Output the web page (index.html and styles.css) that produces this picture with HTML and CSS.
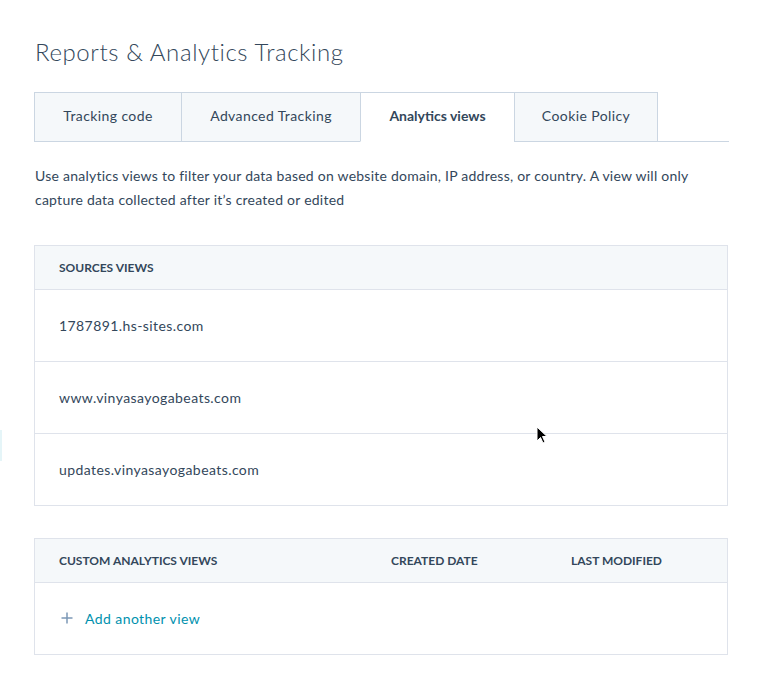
FILE: index.html
```html
<!DOCTYPE html>
<html>
<head>
<meta charset="utf-8">
<link rel="stylesheet" href="styles.css">
</head>
<body>
<div class="page">
  <h1 class="title">Reports &amp; Analytics Tracking</h1>
  <div class="tabs">
    <div class="tab">Tracking code</div>
    <div class="tab">Advanced Tracking</div>
    <div class="tab active">Analytics views</div>
    <div class="tab">Cookie Policy</div>
    <div class="tab-fill"></div>
  </div>
  <p class="desc">Use analytics views to filter your data based on website domain, IP address, or country. A view will only capture data collected after it’s created or edited</p>

  <div class="table">
    <div class="thead"><div class="cell">SOURCES VIEWS</div></div>
    <div class="row"><div class="cell">1787891.hs-sites.com</div></div>
    <div class="row"><div class="cell">www.vinyasayogabeats.com</div></div>
    <div class="row"><div class="cell">updates.vinyasayogabeats.com</div></div>
  </div>

  <div class="table custom">
    <div class="thead cols">
      <div class="cell">CUSTOM ANALYTICS VIEWS</div>
      <div class="cell">CREATED DATE</div>
      <div class="cell">LAST MODIFIED</div>
    </div>
    <div class="row">
      <div class="cell add">
        <svg class="plus" width="12" height="12" viewBox="0 0 12 12"><path d="M6 0.5V11.5M0.5 6H11.5" stroke="#7c98b6" stroke-width="1.5" fill="none"/></svg>
        <span>Add another view</span>
      </div>
    </div>
  </div>
</div>
<div class="edge"></div>
<svg class="cursor" width="14" height="20" viewBox="0 0 14 20"><path d="M1 1 L1 15 L4.5 11.5 L7 17 L9 16 L6.5 10.5 L11 10.5 Z" fill="#000" stroke="#fff" stroke-width="1"/></svg>
</body>
</html>
```
FILE: styles.css
```css
* { box-sizing: border-box; }
html, body { margin: 0; padding: 0; background: #fff; }
body {
  font-family: Lato, "Open Sans", sans-serif;
  color: #33475b;
  width: 777px;
  height: 683px;
  overflow: hidden;
  position: relative;
}
.page { padding: 36px 0 0 34px; width: 729px; }
.title {
  margin: 0 0 0 1px;
  font-size: 24px;
  font-weight: 300;
  line-height: 32px;
  color: #33475b;
  letter-spacing: 0.6px;
}
.tabs {
  display: flex;
  margin-top: 24px;
  height: 50px;
}
.tab {
  background: #f5f8fa;
  border: 1px solid #cbd6e2;
  border-right: none;
  font-size: 14px;
  letter-spacing: 0.4px;
  padding-bottom: 3px;
  display: flex;
  align-items: center;
  justify-content: center;
  color: #33475b;
}
.tab:nth-child(1) { width: 147px; }
.tab:nth-child(2) { width: 179px; }
.tab:nth-child(3) { width: 154px; }
.tab:nth-child(4) { width: 144px; border-right: 1px solid #cbd6e2; }
.tab.active {
  background: #fff;
  border-bottom-color: #fff;
  font-weight: 700;
  letter-spacing: 0;
}
.tab-fill { flex: 1; border-bottom: 1px solid #cbd6e2; }
.desc {
  margin: 22px 0 0 1px;
  font-size: 14px;
  line-height: 24px;
  letter-spacing: 0.24px;
  width: 670px;
}
.table {
  margin-top: 33px;
  width: 694px;
  border: 1px solid #dfe3eb;
}
.table.custom { margin-top: 32px; }
.thead {
  height: 43px;
  background: #f5f8fa;
  display: flex;
  align-items: center;
  font-size: 12px;
  font-weight: 700;
  color: #33475b;
}
.thead .cell { padding-left: 24px; }
.thead.cols .cell:nth-child(1) { width: 332px; }
.thead.cols .cell:nth-child(2) { width: 180px; }
.row {
  height: 72px;
  border-top: 1px solid #dfe3eb;
  display: flex;
  align-items: center;
  font-size: 14px;
  letter-spacing: 0.42px;
  padding-bottom: 1px;
}
.row .cell { padding-left: 24px; }
.add { display: flex; align-items: center; color: #0091ae; }
.plus { margin: 0 12px 0 2px; }
.edge {
  position: absolute;
  left: 0; top: 430px;
  width: 2px; height: 31px;
  background: #e5f5f8;
}
.cursor { position: absolute; left: 536px; top: 426px; }
```
